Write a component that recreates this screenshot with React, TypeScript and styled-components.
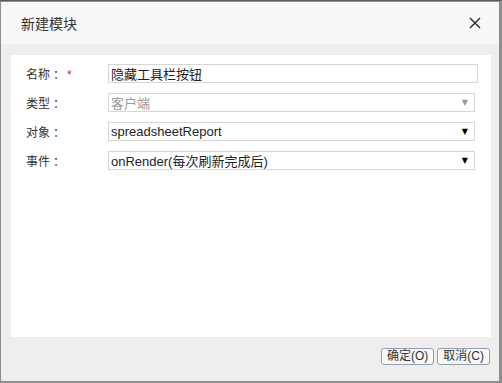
import styled, { createGlobalStyle } from "styled-components";

const GlobalStyle = createGlobalStyle`
  html, body {
    margin: 0;
    padding: 0;
    background: #8c8c8c;
  }
  * {
    box-sizing: border-box;
  }
`;

const Frame = styled.div`
  width: 502px;
  height: 383px;
  padding: 1px 3px 2px 1px;
  background: #8e8e8e;
  border-top: 1px solid #5a5a5a;
  font-family: "Liberation Sans", "Noto Sans CJK SC", sans-serif;
`;

const Dialog = styled.div`
  display: flex;
  flex-direction: column;
  height: 100%;
  background: #efeeec;
`;

const Header = styled.div`
  display: flex;
  align-items: center;
  justify-content: space-between;
  height: 42px;
  padding: 0 18px 0 20px;
  background: #f7f7f7;
`;

const Title = styled.span`
  font-size: 14px;
  color: #333;
`;

const Close = styled.button`
  display: flex;
  padding: 0;
  border: none;
  background: none;
  cursor: pointer;
`;

const Body = styled.div`
  flex: 1;
  display: flex;
  flex-direction: column;
  padding: 11px 8px 0 10px;
`;

const Panel = styled.div`
  display: flex;
  flex-direction: column;
  gap: 10px;
  height: 282px;
  padding: 9px 0 0 15px;
  background: #fff;
`;

const Row = styled.div<{ $inset: number }>`
  display: grid;
  grid-template-columns: 82px 1fr;
  align-items: center;
  height: 19px;
  padding-right: ${(p) => p.$inset}px;
`;

const Label = styled.label`
  font-size: 12px;
  color: #333;
`;

const Colon = styled.span`
  margin-left: 3px;
`;

const Star = styled.span`
  color: #e02020;
  margin-left: 2px;
`;

const Field = styled.div<{ $disabled?: boolean }>`
  display: flex;
  align-items: center;
  justify-content: space-between;
  height: 19px;
  padding: 0 6px 0 2px;
  border: 1px solid #d6d6d6;
  font-size: 13px;
  color: ${(p) => (p.$disabled ? "#999" : "#222")};
  white-space: nowrap;
`;

const Arrow = styled.span<{ $disabled?: boolean }>`
  font-family: "DejaVu Sans", sans-serif;
  font-size: 8px;
  color: ${(p) => (p.$disabled ? "#999" : "#000")};
`;

const Footer = styled.div`
  flex: 1;
  display: flex;
  justify-content: flex-end;
  align-items: flex-start;
  gap: 3px;
  padding: 11px 1px 0 0;
`;

const Button = styled.button`
  height: 17px;
  padding: 0 5px;
  border: 1px solid #8ea0b6;
  border-radius: 3px;
  background: #f7f7f7;
  font-family: "Liberation Sans", "Noto Sans CJK SC", sans-serif;
  font-size: 12px;
  color: #333;
  line-height: 15px;
`;

const rows = [
  { label: "名称", required: true, value: "隐藏工具栏按钮", select: false },
  { label: "类型", value: "客户端", select: true, disabled: true },
  { label: "对象", value: "spreadsheetReport", select: true },
  { label: "事件", value: "onRender(每次刷新完成后)", select: true },
];

export default function App() {
  return (
    <>
      <GlobalStyle />
      <Frame>
        <Dialog>
          <Header>
            <Title>新建模块</Title>
            <Close aria-label="close">
              <svg width="12" height="12" viewBox="0 0 12 12">
                <path d="M1 1L11 11M11 1L1 11" stroke="#333" strokeWidth="1.5" />
              </svg>
            </Close>
          </Header>
          <Body>
            <Panel>
              {rows.map((r) => (
                <Row key={r.label} $inset={r.select ? 16 : 13}>
                  <Label>
                    {r.label}
                    <Colon>：</Colon>
                    {r.required && <Star>*</Star>}
                  </Label>
                  <Field $disabled={r.disabled}>
                    <span>{r.value}</span>
                    {r.select && <Arrow $disabled={r.disabled}>▼</Arrow>}
                  </Field>
                </Row>
              ))}
            </Panel>
            <Footer>
              <Button>确定(O)</Button>
              <Button>取消(C)</Button>
            </Footer>
          </Body>
        </Dialog>
      </Frame>
    </>
  );
}
